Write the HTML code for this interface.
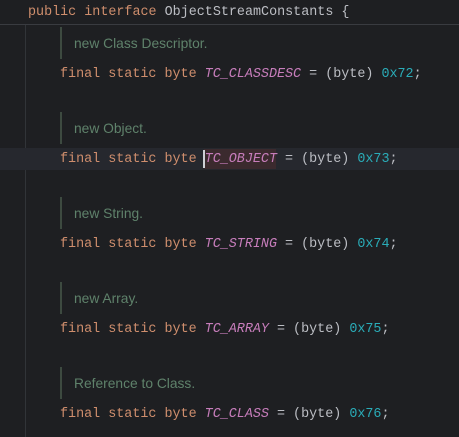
<html><head><style>
body{margin:0;width:459px;height:437px;background:#1e1f22;overflow:hidden;position:relative;font-family:"Liberation Mono",monospace;font-size:13.4px}
.l{position:absolute;white-space:pre;line-height:20px}
.k{color:#cf8e6d}.c{color:#c77dbb;font-style:italic}.n{color:#2aacb8}.t{color:#bcbec4}
.cm{position:absolute;left:74px;font-family:"Liberation Sans",sans-serif;font-size:13.8px;color:#5f826b;line-height:20px}
.bar{position:absolute;left:60px;width:2px;height:32px;background:#3d4a40}
</style></head><body>
<div style="position:absolute;left:0;top:24px;width:459px;height:1px;background:#393b40"></div>
<div style="position:absolute;left:25px;top:25px;width:1px;height:412px;background:#313438"></div>
<div style="position:absolute;left:0;top:148px;width:459px;height:22px;background:#26282e"></div>
<div class="l" style="left:28px;top:3px"><span class="k">public interface </span><span class="t">ObjectStreamConstants {</span></div>

<div class="bar" style="top:27px"></div><div class="cm" style="top:34px">new Class Descriptor.</div>
<div class="l" style="left:60px;top:65px"><span class="k">final static byte </span><span class="c">TC_CLASSDESC</span><span class="t"> = (byte) </span><span class="n">0x72</span><span class="t">;</span></div>

<div class="bar" style="top:112px"></div><div class="cm" style="top:119px">new Object.</div>
<div style="position:absolute;left:204px;top:149px;width:72px;height:20px;background:#3b2a2e"></div>
<div style="position:absolute;left:203px;top:150px;width:2px;height:18px;background:#ced0d6"></div>
<div class="l" style="left:60px;top:150px"><span class="k">final static byte </span><span class="c">TC_OBJECT</span><span class="t"> = (byte) </span><span class="n">0x73</span><span class="t">;</span></div>

<div class="bar" style="top:197px"></div><div class="cm" style="top:204px">new String.</div>
<div class="l" style="left:60px;top:235px"><span class="k">final static byte </span><span class="c">TC_STRING</span><span class="t"> = (byte) </span><span class="n">0x74</span><span class="t">;</span></div>

<div class="bar" style="top:282px"></div><div class="cm" style="top:289px">new Array.</div>
<div class="l" style="left:60px;top:320px"><span class="k">final static byte </span><span class="c">TC_ARRAY</span><span class="t"> = (byte) </span><span class="n">0x75</span><span class="t">;</span></div>

<div class="bar" style="top:367px"></div><div class="cm" style="top:374px">Reference to Class.</div>
<div class="l" style="left:60px;top:405px"><span class="k">final static byte </span><span class="c">TC_CLASS</span><span class="t"> = (byte) </span><span class="n">0x76</span><span class="t">;</span></div>
</body></html>
